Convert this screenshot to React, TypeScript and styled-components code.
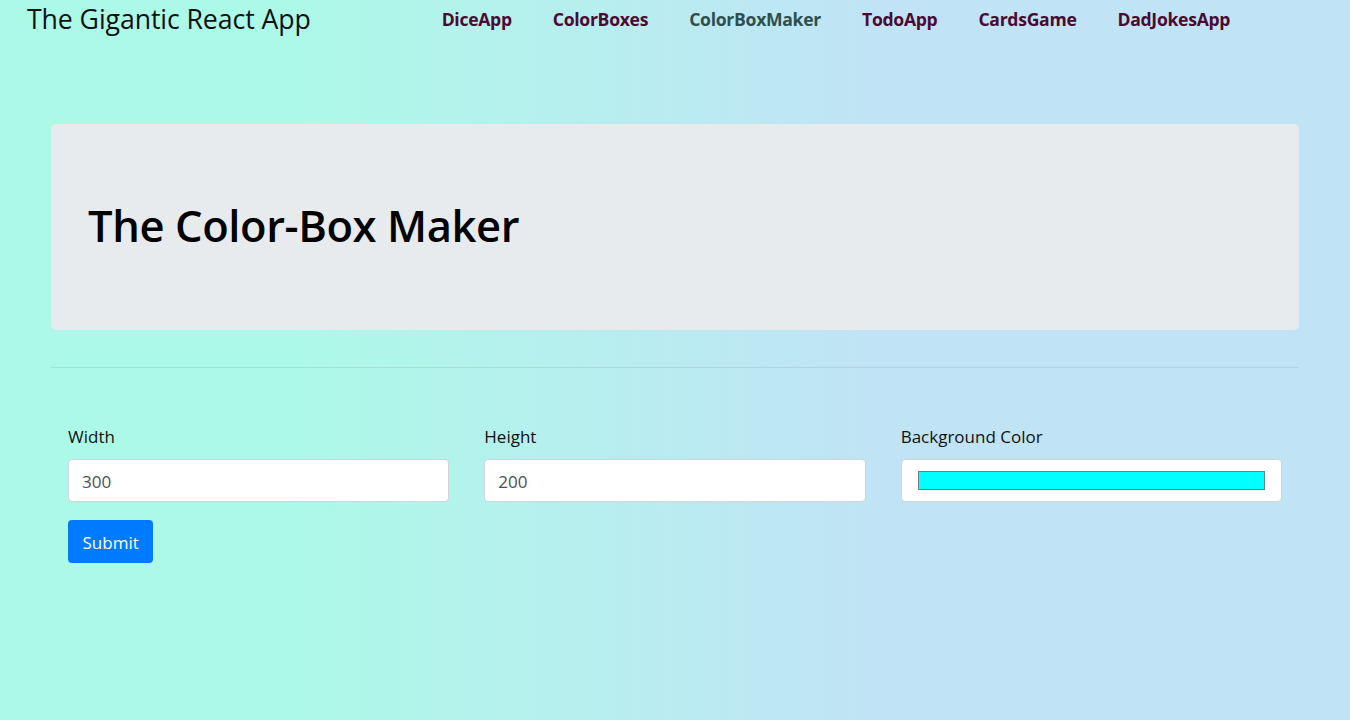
import styled, { createGlobalStyle } from 'styled-components'

const GlobalStyle = createGlobalStyle`
  html, body {
    margin: 0;
    padding: 0;
  }
  body {
    font-family: "Open Sans", "Noto Sans", sans-serif;
    color: #212529;
    min-height: 720px;
    background: linear-gradient(90deg, #adf9e8 0%, #adf9e8 22%, #c0e4f5 64%, #c0e4f5 100%);
  }
  * {
    box-sizing: border-box;
  }
`

const links = ['DiceApp', 'ColorBoxes', 'ColorBoxMaker', 'TodoApp', 'CardsGame', 'DadJokesApp']

const App = () => {
  return (
    <Page>
      <GlobalStyle />
      <NavBar>
        <Brand>The Gigantic React App</Brand>
        <NavLinks>
          {links.map((l) => (
            <NavLink key={l} $active={l === 'ColorBoxMaker'}>
              {l}
            </NavLink>
          ))}
        </NavLinks>
      </NavBar>

      <Container>
        <Jumbotron>
          <Title>The Color-Box Maker</Title>
        </Jumbotron>
        <Divider />

        <Form onSubmit={(e) => e.preventDefault()}>
          <Row>
            <Field>
              <Label>Width</Label>
              <Input type="text" defaultValue="300" />
            </Field>
            <Field>
              <Label>Height</Label>
              <Input type="text" defaultValue="200" />
            </Field>
            <Field>
              <Label>Background Color</Label>
              <ColorWrap>
                <Swatch $color="#00ffff" />
              </ColorWrap>
            </Field>
          </Row>
          <SubmitButton type="submit">Submit</SubmitButton>
        </Form>
      </Container>
    </Page>
  )
}

const Page = styled.div`
  min-height: 720px;
`

const NavBar = styled.nav`
  display: flex;
  align-items: center;
  height: 37px;
  padding: 0 0 0 27px;
`

const Brand = styled.div`
  font-size: 26.7px;
  color: #111;
  line-height: 37px;
  letter-spacing: -0.1px;
`

const NavLinks = styled.div`
  display: flex;
  gap: 41px;
  margin-left: 131px;
`

const NavLink = styled.a<{ $active?: boolean }>`
  font-size: 17.6px;
  font-weight: 700;
  letter-spacing: -0.3px;
  color: ${(p) => (p.$active ? '#2f4f4f' : '#4b0a32')};
  cursor: pointer;
  text-decoration: none;
`

const Container = styled.div`
  padding: 87px 51px 0;
`

const Jumbotron = styled.div`
  background: #e8ebee;
  border-radius: 5px;
  height: 206px;
  display: flex;
  align-items: center;
  padding: 0 37px;
`

const Title = styled.h1`
  margin: -4px 0 0;
  font-size: 43.5px;
  font-weight: 600;
  color: #000;
  letter-spacing: -0.4px;
`

const Divider = styled.hr`
  margin: 37px 0 0;
  border: 0;
  border-top: 1px solid rgba(0, 0, 0, 0.08);
`

const Form = styled.form`
  padding: 56px 17px 0;
`

const Row = styled.div`
  display: grid;
  grid-template-columns: repeat(3, 1fr);
  column-gap: 35px;
`

const Field = styled.div`
  display: flex;
  flex-direction: column;
`

const Label = styled.label`
  font-size: 17px;
  color: #111;
  margin-bottom: 10px;
  line-height: 25px;
`

const Input = styled.input`
  height: 43px;
  border: 1px solid #ced4da;
  border-radius: 4px;
  background: #fff;
  padding: 2px 13px 0;
  font-family: inherit;
  font-size: 17px;
  color: #495057;
  outline: none;
`

const ColorWrap = styled.div`
  height: 43px;
  border: 1px solid #ced4da;
  border-radius: 4px;
  background: #fff;
  display: flex;
  align-items: center;
  padding: 0 16px;
`

const Swatch = styled.div<{ $color: string }>`
  flex: 1;
  height: 19px;
  background: ${(p) => p.$color};
  border: 1px solid #6b7f82;
`

const SubmitButton = styled.button`
  margin-top: 18px;
  height: 43px;
  padding: 1px 14.5px 0;
  border: 0;
  border-radius: 4px;
  background: #007bff;
  color: #fff;
  font-family: inherit;
  font-size: 17px;
  cursor: pointer;
`

export default App
